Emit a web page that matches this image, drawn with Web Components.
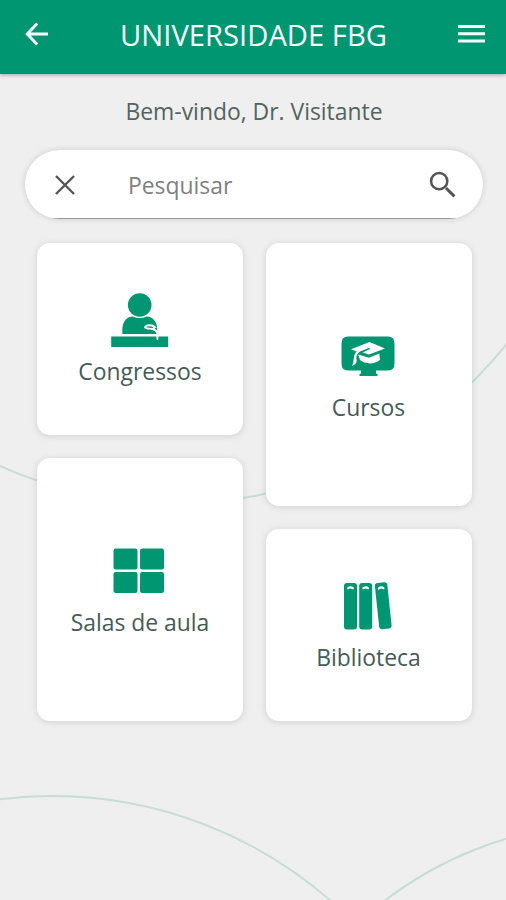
<!DOCTYPE html>
<html lang="pt-BR">
<head>
<meta charset="utf-8">
<title>Universidade FBG</title>
<style>
html,body{margin:0;height:100%;overflow:hidden}
body{font-family:"Open Sans","Noto Sans",sans-serif;background:#efefef}
</style>
</head>
<body>
<fbg-app></fbg-app>
<script>
const define = (name, html) => {
  const t = document.createElement('template');
  t.innerHTML = html;
  customElements.define(name, class extends HTMLElement {
    constructor() {
      super();
      this.attachShadow({mode: 'open'}).append(t.content.cloneNode(true));
    }
  });
};

const icons = {
  back: [24, 24, '<path d="M23 12H2.5M12.200 1.500L2.200 12l10 10.500" fill="none" stroke="currentColor" stroke-width="2.9"/>'],
  menu: [27, 20, '<path d="M0 2.4h27M0 9.7h27M0 17h27" fill="none" stroke="currentColor" stroke-width="3"/>'],
  close: [20, 20, '<path d="M1 1l18 18M19 1L1 19" fill="none" stroke="currentColor" stroke-width="2.4"/>'],
  search: [27, 27, '<circle cx="10.2" cy="10.2" r="8.1" fill="none" stroke="currentColor" stroke-width="2.5"/><path d="M17 17l8.4 8.4" stroke="currentColor" stroke-width="3"/>'],
  speaker: [60, 54, '<g transform="translate(1.700 0)"><g fill="currentColor"><circle cx="29" cy="12" r="11.8"/><path d="M11.6 41v-4.500C11.600 28 17 23.500 22 23.500q7 3.200 14 0C42 23.500 46.500 29 46.500 36v5z"/><path d="M.5 43.500h57V54H.5z"/></g><path d="M46.700 46v-4.800c0-2.700-1.500-4.200-4.700-5.200-2.500-.700-6.500.200-7.700-1.800 1.400-2.700 7.500-2.500 10-.1l-2.300 1.900" fill="none" stroke="#fff" stroke-width="1.9" stroke-linecap="round"/></g>'],
  course: [54, 40, '<path fill="currentColor" d="M7 .5h40q6.500 0 6.500 7v20q0 7-6.500 7H35v2.500q0 1 1.500 1v2h-18v-2q1.500 0 1.500-1v-2.500H7q-6.500 0-6.500-7v-20q0-7 6.500-7z"/><path fill="#fff" d="M10 13.200L28.500 6 44 12.500 28 18.600 21.600 16.500 29 13l-.7-1.200-9.200 3.800c-3 1.700-3.800 4.300-3.800 7.400 1.300 2.200-.5 6-4.500 6.800 2.200-2.500 1.200-5.400 2.100-7.200.1-2.800.8-5 2.800-7zM17.200 18.500L28 21.700l10.300-4.200.7 6.200c-5.500 4.900-14.500 4.800-20 .4z"/>'],
  rooms: [52, 46, '<g fill="currentColor"><rect x=".5" y=".5" width="24" height="21" rx="2.200"/><rect x="27" y=".5" width="24" height="21" rx="2.200"/><rect x=".5" y="24" width="24" height="21" rx="2.200"/><rect x="27" y="24" width="24" height="21" rx="2.200"/></g>'],
  books: [50, 48, '<g fill="currentColor"><rect x="1" y="1" width="13" height="46.500" rx="3"/><rect x="16.200" y="1" width="13" height="46.500" rx="3"/><rect x="34" y=".8" width="12.500" height="46.500" rx="3" transform="rotate(-6 38 24)"/></g><g fill="none" stroke="#fff" stroke-width="2.200" stroke-linecap="round"><path d="M5.200 6.200q2.300-1.500 4.600 0M20.400 6.200q2.300-1.500 4.600 0M35.800 6.500q2.300-1.800 4.600-.4"/></g>']
};
customElements.define('fbg-icon', class extends HTMLElement {
  constructor() { super(); this.attachShadow({mode: 'open'}); }
  connectedCallback() {
    const [w, h, art] = icons[this.getAttribute('name')];
    this.shadowRoot.innerHTML = `<style>:host{display:block;flex:none}svg{display:block}</style>
      <svg width="${w}" height="${h}" viewBox="0 0 ${w} ${h}">${art}</svg>`;
  }
});

define('fbg-header', `<style>
:host{display:flex;align-items:center;justify-content:space-between;box-sizing:border-box;height:74px;padding:0 21px 6px 25px;background:#009671;color:#f5fffc;box-shadow:0 1px 4px #0005}
h1{margin:0;font-size:29.200px;font-weight:400;line-height:40px;white-space:nowrap;padding-top:2px}
</style><fbg-icon name="back"></fbg-icon><h1><slot></slot></h1><fbg-icon name="menu"></fbg-icon>`);

define('fbg-search', `<style>
:host{display:flex;align-items:center;box-sizing:border-box;height:69px;margin:0 23px 0 25px;padding:0 27px 0 30px;border-radius:35px;background:linear-gradient(#999,#999) 50% 100%/410px 1.500px no-repeat #fff;box-shadow:0 0 6px #00000026;color:#555}
span{flex:1;padding:2px 0 0 53px;font-size:22.900px;line-height:34px;color:#7f7f7f}
</style><fbg-icon name="close"></fbg-icon><span><slot></slot></span><fbg-icon name="search"></fbg-icon>`);

define('fbg-card', `<style>
:host{display:flex;flex-direction:column;align-items:center;justify-content:center;box-sizing:border-box;height:192px;padding-top:2px;border-radius:13px;background:#fff;box-shadow:0 1px 7px #00000022;color:#009671}
:host([tall]){height:263px}
.icon{display:flex;align-items:center;height:58px;margin-right:2px}
.label{margin-top:6px;font-size:22.900px;line-height:34px;color:#465b57;white-space:nowrap}
</style><div class="icon"><slot name="icon"></slot></div><div class="label"><slot></slot></div>`);

define('fbg-app', `<style>
:host{display:grid;grid-template:100vh/100vw}
:host>*{grid-area:1/1}
p{margin:21px 0 21px 2px;text-align:center;font-size:22.900px;line-height:34px;color:#53645f}
main{position:relative}
.cards{display:grid;grid-template-columns:206px 206px;gap:22.500px;margin:24px 0 0 37px}
.col{display:flex;flex-direction:column;gap:23px}
</style>
<svg width="506" height="900" viewBox="0 0 506 900" fill="none" stroke="#c5ded6" stroke-width="2">
<circle cx="174.700" cy="78.300" r="425.200"/><circle cx="52" cy="1219" r="423"/><circle cx="614" cy="1200" r="377"/></svg>
<main>
<fbg-header>UNIVERSIDADE FBG</fbg-header>
<p><span>Bem-vindo, Dr. Visitante</span></p>
<fbg-search>Pesquisar</fbg-search>
<div class="cards">
<div class="col">
<fbg-card><fbg-icon slot="icon" name="speaker"></fbg-icon>Congressos</fbg-card>
<fbg-card tall><fbg-icon slot="icon" name="rooms"></fbg-icon>Salas de aula</fbg-card>
</div>
<div class="col">
<fbg-card tall><fbg-icon slot="icon" name="course"></fbg-icon>Cursos</fbg-card>
<fbg-card><fbg-icon slot="icon" name="books"></fbg-icon>Biblioteca</fbg-card>
</div>
</div>
</main>`);
</script>
</body>
</html>
